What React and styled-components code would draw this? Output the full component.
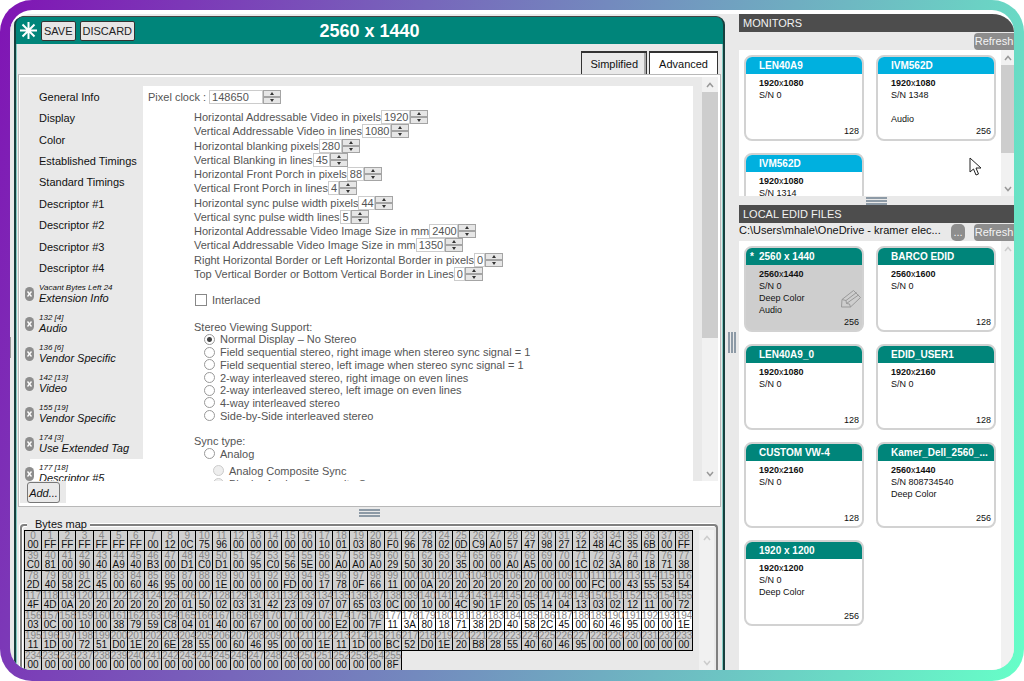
import { styled, createGlobalStyle, css } from "styled-components";

const GlobalStyle = createGlobalStyle`
  * {
    box-sizing: border-box;
  }
  body {
    margin: 0;
    background: #fff;
    font-family: "Liberation Sans", Arial, sans-serif;
    font-size: 11px;
    line-height: 12px;
    color: #111;
  }
  button, input {
    font: inherit;
    color: inherit;
    margin: 0;
    padding: 0;
  }
`;

const Frame = styled.div`
  height: 100vh;
  padding: 10px 10px 11px;
  border-radius: 32px;
  background: linear-gradient(106deg, #8014b4, #66ffc8);
`;

const Screen = styled.div`
  position: relative;
  display: flex;
  height: 100%;
  padding-left: 4px;
  overflow: hidden;
  border-radius: 22px;
  border-top: 4px solid #fff;
  background: #e9e9e9;
`;

/* editor */

const Editor = styled.main`
  flex: 1;
  min-width: 0;
  display: flex;
  flex-direction: column;
  margin-top: 2px;
  border: 2px solid #17403e;
  border-top: 1px solid #444;
  border-bottom: 0;
  border-radius: 9px 9px 0 0;
  background: #00857a;
`;

const TitleBar = styled.header`
  display: grid;
  grid-template-columns: 1fr auto 1fr;
  align-items: center;
  height: 27px;
  padding: 0 4px;
  h1 {
    margin: 0;
    font-size: 18px;
    line-height: 20px;
    color: #fff;
  }
`;

const Actions = styled.div`
  display: flex;
  align-items: center;
  gap: 4px;
`;

const BarButton = styled.button`
  height: 20px;
  padding: 0 2px;
  border: 1px solid #333;
  border-radius: 2px;
  background: #e6e6e6;
  color: #222;
`;

const EditorBody = styled.div`
  flex: 1;
  min-height: 0;
  display: flex;
  flex-direction: column;
  padding: 0 1px;
  border: solid #85cbc4;
  border-width: 0 1px;
  background: #e9e9e9;
`;

const Tabs = styled.div`
  display: flex;
  justify-content: flex-end;
  gap: 2px;
  height: 30px;
  padding: 7px 3px 0 0;
`;

const Tab = styled.button`
  padding: 0 ${(p) => (p.$active ? 9 : 8)}px;
  border: 1px solid #333;
  border-top-width: 2px;
  border-bottom: 0;
  background: ${(p) => (p.$active ? "#fff" : "#e9e9e9")};
  box-shadow: ${(p) => (p.$active ? "none" : "inset -2px 0 #aaa")};
`;

const TabPanel = styled.section`
  flex: 1;
  min-height: 0;
  display: flex;
  flex-direction: column;
  padding: 2px 2px 0 1px;
  border: 1px solid #b8b8b8;
  background: #fff;
`;

const Scroller = styled.div`
  flex: 1;
  min-height: 0;
  display: flex;
  overflow: hidden;
  background: #e9e9e9;
`;

const Nav = styled.nav`
  width: 123px;
  padding-top: 9px;
`;

const PageList = styled.div`
  display: flex;
  flex-direction: column;
  min-height: 193px;
  a {
    flex: 1;
    display: flex;
    align-items: center;
    padding-left: 19px;
    color: #111;
    text-decoration: none;
    white-space: nowrap;
  }
`;

const Block = styled.div`
  display: flex;
  align-items: flex-start;
  gap: 5px;
  height: 30px;
  padding: 4px 0 0 5px;
  font-style: italic;
  ${(p) =>
    p.$active &&
    css`
      background: linear-gradient(90deg, transparent 10px, #fff 10px);
    `}
  a {
    color: #111;
    text-decoration: none;
    white-space: nowrap;
  }
  small {
    display: block;
    font-size: 8px;
    line-height: 9px;
  }
`;

const RemoveButton = styled.button`
  flex: none;
  display: flex;
  align-items: center;
  justify-content: center;
  width: 9px;
  height: 14px;
  margin-top: 4px;
  border: 0;
  border-radius: 5px;
  background: #8d8d8d;
  svg {
    display: block;
  }
`;

const Form = styled.form`
  flex: 1;
  min-width: 0;
  margin: 9px 9px 0 0;
  padding: 4px 0 0 5px;
  background: #fff;
  color: #555;
  white-space: nowrap;
`;

const Indent = styled.div`
  padding-left: 46px;
`;

const Rows = styled.div`
  display: flex;
  flex-direction: column;
  min-height: 171px;
  margin-top: 6px;
`;

const FieldRow = styled.div`
  flex: 1;
  display: flex;
  align-items: center;
  gap: ${(p) => p.$gap || 0}px;
`;

const Spinner = styled.span`
  display: inline-flex;
  input {
    width: ${(p) => p.$width}px;
    height: 14px;
    padding-left: 2px;
    border: 1px solid #ccc;
    background: #fff;
    outline: 0;
  }
`;

const Steps = styled.span`
  display: flex;
  flex-direction: column;
  width: 18px;
  height: 14px;
  button {
    flex: 1;
    display: flex;
    align-items: center;
    justify-content: center;
    min-height: 0;
    border: 1px solid #a4a4a4;
    background: #e6e6e6;
  }
`;

const CheckRow = styled.label`
  display: flex;
  align-items: center;
  gap: 5px;
  margin-top: 12px;
  line-height: 14px;
  input {
    appearance: none;
    width: 12px;
    height: 12px;
    margin-left: 1px;
    border: 1px solid #888;
    background: #fff;
  }
`;

const Group = styled.div`
  margin-top: ${(p) => p.$top}px;
`;

const Radios = styled.div`
  display: flex;
  flex-direction: column;
  min-height: ${(p) => p.$height}px;
  padding-left: ${(p) => p.$indent || 10}px;
`;

const RadioRow = styled.label`
  flex: 1;
  display: flex;
  align-items: center;
  gap: 5px;
  input {
    appearance: none;
    width: 11px;
    height: 11px;
    border: 1px solid #999;
    border-radius: 50%;
    background: #fff;
  }
  input:checked {
    background: radial-gradient(#444 0 2px, #fff 3px);
  }
  input:disabled {
    border-color: #ccc;
    background: #eee;
  }
`;

const AddBar = styled.div`
  display: flex;
  height: 25px;
  div {
    width: 46px;
    height: 22px;
    padding: 1px 0 0 7px;
    background: #e9e9e9;
  }
  button {
    width: 33px;
    height: 21px;
    border: 1px solid #777;
    border-radius: 3px;
    background: #e9e9e9;
    font-style: italic;
  }
`;

const Grip = styled.div`
  display: flex;
  justify-content: center;
  align-items: center;
  width: ${(p) => (p.$vertical ? "14px" : "auto")};
  height: ${(p) => (p.$vertical ? "auto" : `${p.$size}px`)};
  &::before {
    content: "";
    width: ${(p) => (p.$vertical ? "8px" : "21px")};
    height: ${(p) => (p.$vertical ? "21px" : "8px")};
    background: repeating-linear-gradient(
      ${(p) => (p.$vertical ? "90deg" : "180deg")},
      #8d9aa6 0 2px,
      #e9e9e9 2px 3px
    );
  }
`;

/* bytes map */

const BytesArea = styled.div`
  flex: 0 0 163px;
  overflow: hidden;
`;

const BytesBox = styled.fieldset`
  min-width: 0;
  height: 170px;
  margin: 0 3px 0 2px;
  padding: 0 2px;
  border: 2px solid #808080;
  border-bottom: 0;
  border-radius: 4px;
  box-shadow: inset 1px 1px #fff, -1px -1px #fff;
  legend {
    margin-left: 3px;
    padding: 0 3px 0 8px;
    line-height: 11px;
    background: #e9e9e9;
  }
`;

const BytesRow = styled.div`
  display: flex;
  height: 140px;
  align-items: flex-start;
`;

const ByteGrid = styled.div`
  flex: 1;
  min-width: 0;
  margin-right: 6px;
`;

const ByteTable = styled.table`
  width: 100%;
  table-layout: fixed;
  border-collapse: collapse;
  font-size: 10px;
  line-height: 9px;
`;

const Byte = styled.td`
  height: 20px;
  padding: 0;
  border: 1px solid #000;
  background: ${(p) => (p.$active ? "#fff" : "#d0d0d0")};
  text-align: center;
  vertical-align: top;
  span {
    display: block;
    color: #888;
  }
`;

/* scroll bar */

const Track = styled.div`
  flex: none;
  display: flex;
  flex-direction: column;
  align-items: center;
  align-self: stretch;
  width: ${(p) => p.$width}px;
  background: #f1f1f1;
  button {
    display: flex;
    align-items: center;
    justify-content: center;
    width: 100%;
    height: 15px;
    border: 0;
    background: none;
    color: ${(p) => (p.$faint ? "#ccc" : "#999")};
  }
`;

const Thumb = styled.div`
  width: 100%;
  height: ${(p) => p.$size}%;
  margin-bottom: auto;
  background: #cdcdcd;
`;

/* side panels */

const Side = styled.aside`
  flex: 0 0 275px;
  min-width: 0;
  display: flex;
  flex-direction: column;
`;

const Heading = styled.h2`
  flex: none;
  margin: 0;
  padding: 0 4px;
  background: #4d4d4d;
  color: #f2f2f2;
  font-size: 11px;
  font-weight: 400;
  line-height: 18px;
`;

const Tools = styled.div`
  flex: none;
  display: flex;
  align-items: center;
  gap: 9px;
  height: 18px;
  span {
    flex: 1;
    padding-bottom: 4px;
    overflow: hidden;
    white-space: nowrap;
  }
`;

const GreyButton = styled.button`
  flex: none;
  height: 17px;
  width: ${(p) => (p.$wide ? "40px" : "14px")};
  border: 0;
  border-radius: ${(p) => (p.$wide ? "4px 0 0 4px" : "5px")};
  background: #8d8d8d;
  color: #f4f4f4;
  text-align: center;
`;

const ListBox = styled.div`
  display: flex;
  flex: ${(p) => (p.$height ? `0 0 ${p.$height}px` : "1")};
  min-height: 0;
  overflow: hidden;
`;

const Cards = styled.div`
  flex: 1;
  display: grid;
  grid-template-columns: 1fr 1fr;
  grid-auto-rows: 86px;
  gap: 12px;
  padding: 5px;
  background: #fff;
`;

const Card = styled.article`
  display: flex;
  flex-direction: column;
  min-width: 0;
  overflow: hidden;
  border: 2px solid #d2d2d2;
  border-radius: 8px;
  background: ${(p) => (p.$selected ? "#cecece" : "#fff")};
  font-size: 9px;
  h3 {
    display: flex;
    margin: 0;
    padding-right: 3px;
    background: ${(p) => p.$color};
    color: #fff;
    font-size: 10px;
    line-height: 17px;
    white-space: nowrap;
  }
  h3 i {
    width: 13px;
    padding-left: 4px;
    font-style: normal;
  }
`;

const CardBody = styled.div`
  position: relative;
  flex: 1;
  padding: 3px 3px 2px 13px;
  p {
    height: 12px;
    margin: 0;
  }
  p:last-of-type {
    text-align: right;
  }
  svg {
    position: absolute;
    right: 1px;
    bottom: 22px;
  }
`;

const Cursor = styled.svg`
  position: absolute;
  right: 32px;
  top: 143px;
`;

const EdgeGrip = styled.i`
  position: absolute;
  left: 0;
  top: 323px;
  width: 1px;
  height: 21px;
  background: #999;
`;

const pages = [
  "General Info",
  "Display",
  "Color",
  "Established Timings",
  "Standard Timings",
  "Descriptor #1",
  "Descriptor #2",
  "Descriptor #3",
  "Descriptor #4",
];

const blocks = [
  ["Vacant Bytes Left 24", "Extension Info"],
  ["132 [4]", "Audio"],
  ["136 [6]", "Vendor Specific"],
  ["142 [13]", "Video"],
  ["155 [19]", "Vendor Specific"],
  ["174 [3]", "Use Extended Tag"],
  ["177 [18]", "Descriptor #5"],
];

const fields = [
  ["Horizontal Addressable Video in pixels", "1920"],
  ["Vertical Addressable Video in lines", "1080"],
  ["Horizontal blanking pixels", "280"],
  ["Vertical Blanking in lines", "45"],
  ["Horizontal Front Porch in pixels", "88"],
  ["Vertical Front Porch in lines", "4"],
  ["Horizontal sync pulse width pixels", "44"],
  ["Vertical sync pulse width lines", "5"],
  ["Horizontal Addressable Video Image Size in mm", "2400"],
  ["Vertical Addressable Video Image Size in mm", "1350"],
  ["Right Horizontal Border or Left Horizontal Border in pixels", "0"],
  ["Top Vertical Border or Bottom Vertical Border in Lines", "0"],
];

const stereoModes = [
  "Normal Display – No Stereo",
  "Field sequential stereo, right image when stereo sync signal = 1",
  "Field sequential stereo, left image when stereo sync signal = 1",
  "2-way interleaved stereo, right image on even lines",
  "2-way interleaved stereo, left image on even lines",
  "4-way interleaved stereo",
  "Side-by-Side interleaved stereo",
];

const bytes = `
00 FF FF FF FF FF FF 00 12 0C 75 96 00 00 00 00 00 10 01 03 80 F0 96 78 02 0D C9 A0 57 47 98 27 12 48 4C 35 6B 00 FF
C0 81 00 90 40 A9 40 B3 00 D1 C0 D1 00 95 C0 56 5E 00 A0 A0 A0 29 50 30 20 35 00 00 A0 A5 00 00 1C 02 3A 80 18 71 38
2D 40 58 2C 45 00 60 46 95 00 00 1E 00 00 00 FD 00 17 78 0F 66 11 00 0A 20 20 20 20 20 20 00 00 00 FC 00 43 55 53 54
4F 4D 0A 20 20 20 20 20 20 01 50 02 03 31 42 23 09 07 07 65 03 0C 00 10 00 4C 90 1F 20 05 14 04 13 03 02 12 11 00 72
03 0C 00 10 00 38 79 59 C8 04 01 40 00 67 00 00 00 00 E2 00 7F 11 3A 80 18 71 38 2D 40 58 2C 45 00 60 46 95 00 00 1E
11 1D 00 72 51 D0 1E 20 6E 28 55 00 60 46 95 00 00 1E 11 1D 00 BC 52 D0 1E 20 B8 28 55 40 60 46 95 00 00 00 00 00 00
00 00 00 00 00 00 00 00 00 00 00 00 00 00 00 00 00 00 00 00 00 8F
`
  .trim()
  .split("\n")
  .map((row) => row.split(" "));

const BLUE = "#00b0df";
const TEAL = "#00857a";

const monitors = [
  { name: "LEN40A9", w: 1920, h: 1080, sn: "0", size: 128 },
  { name: "IVM562D", w: 1920, h: 1080, sn: "1348", audio: true, size: 256 },
  { name: "IVM562D", w: 1920, h: 1080, sn: "1314" },
];

const files = [
  { name: "2560 x 1440", w: 2560, h: 1440, sn: "0", deep: true, audio: true, size: 256, selected: true },
  { name: "BARCO EDID", w: 2560, h: 1600, sn: "0", size: 128 },
  { name: "LEN40A9_0", w: 1920, h: 1080, sn: "0", size: 128 },
  { name: "EDID_USER1", w: 1920, h: 2160, sn: "0", size: 128 },
  { name: "CUSTOM VW-4", w: 1920, h: 2160, sn: "0", size: 128 },
  { name: "Kamer_Dell_2560_...", w: 2560, h: 1440, sn: "808734540", deep: true, size: 256 },
  { name: "1920 x 1200", w: 1920, h: 1200, sn: "0", deep: true, size: 256 },
];

const Chevron = ({ down }) => (
  <svg width="8" height="6" viewBox="0 0 8 6" fill="none" stroke="currentColor" strokeWidth="1.5">
    <path d={down ? "M1 1l3 3.5L7 1" : "M1 5l3-3.5L7 5"} />
  </svg>
);

const ScrollBar = ({ width, thumb, faint, noDown }) => (
  <Track $width={width} $faint={faint}>
    <button type="button" aria-label="Scroll up">
      <Chevron />
    </button>
    <Thumb $size={thumb} />
    {!noDown && (
      <button type="button" aria-label="Scroll down">
        <Chevron down />
      </button>
    )}
  </Track>
);

const NumberBox = ({ id, value, width }) => (
  <Spinner $width={width || 5 + 6 * value.length}>
    <input id={id} type="text" defaultValue={value} />
    <Steps>
      <button type="button" aria-label="Increase">
        <svg width="4" height="3" viewBox="0 0 4 3">
          <path d="M2 0l2 3H0z" fill="#333" />
        </svg>
      </button>
      <button type="button" aria-label="Decrease">
        <svg width="4" height="3" viewBox="0 0 4 3">
          <path d="M0 0h4L2 3z" fill="#333" />
        </svg>
      </button>
    </Steps>
  </Spinner>
);

const DeviceCard = ({ item, color }) => (
  <Card $color={color} $selected={item.selected}>
    <h3>
      <i>{item.selected ? "*" : ""}</i>
      {item.name}
    </h3>
    <CardBody>
      <p>
        <b>{item.w}</b>x<b>{item.h}</b>
      </p>
      <p>S/N {item.sn}</p>
      <p>{item.deep ? "Deep Color" : ""}</p>
      <p>{item.audio ? "Audio" : ""}</p>
      <p>{item.size}</p>
      {item.selected && (
        <svg width="20" height="18" viewBox="0 0 20 18" fill="none" stroke="#999" strokeLinejoin="round">
          <path d="M.5 17L1 9.500L12.500.5L19.500 7.500L9.500 17zM1 9.500l4 1 .5 3 3 .5 1 3M5 10.500L15.500 2.500M5.500 13.500L17.500 5" />
        </svg>
      )}
    </CardBody>
  </Card>
);

const App = () => {
  return (
    <>
      <GlobalStyle />
      <Frame>
        <Screen>
          <Editor>
            <TitleBar>
              <Actions>
                <svg width="17" height="17" viewBox="0 0 17 17" stroke="#fff" strokeWidth="2">
                  <path d="M8.500 0v17M0 8.500h17M2.500 2.500l12 12M14.500 2.500l-12 12" />
                </svg>
                <BarButton type="button">SAVE</BarButton>
                <BarButton type="button">DISCARD</BarButton>
              </Actions>
              <h1>2560 x 1440</h1>
            </TitleBar>
            <EditorBody>
              <Tabs>
                <Tab type="button">Simplified</Tab>
                <Tab type="button" $active>
                  Advanced
                </Tab>
              </Tabs>
              <TabPanel>
                <Scroller>
                  <Nav>
                    <PageList>
                      {pages.map((page) => (
                        <a key={page} href="#page">
                          {page}
                        </a>
                      ))}
                    </PageList>
                    {blocks.map(([info, name], i) => (
                      <Block key={info} $active={i === blocks.length - 1}>
                        <RemoveButton type="button" aria-label={`Remove ${name}`}>
                          <svg width="5" height="6" viewBox="0 0 5 6" stroke="#fff" strokeWidth="1.3">
                            <path d="M.5.5l4 5M4.500.5l-4 5" />
                          </svg>
                        </RemoveButton>
                        <a href="#block">
                          <small>{info}</small>
                          {name}
                        </a>
                      </Block>
                    ))}
                  </Nav>
                  <Form>
                    <FieldRow $gap={3}>
                      <label htmlFor="clock">Pixel clock :</label>
                      <NumberBox id="clock" value="148650" width={54} />
                    </FieldRow>
                    <Indent>
                      <Rows>
                        {fields.map(([label, value], i) => (
                          <FieldRow key={label}>
                            <label htmlFor={`field${i}`}>{label}</label>
                            <NumberBox id={`field${i}`} value={value} />
                          </FieldRow>
                        ))}
                      </Rows>
                      <CheckRow>
                        <input type="checkbox" />
                        Interlaced
                      </CheckRow>
                      <Group $top={14}>
                        Stereo Viewing Support:
                        <Radios $height={89}>
                          {stereoModes.map((mode, i) => (
                            <RadioRow key={mode}>
                              <input type="radio" name="stereo" defaultChecked={i === 0} />
                              {mode}
                            </RadioRow>
                          ))}
                        </Radios>
                      </Group>
                      <Group $top={13}>
                        Sync type:
                        <Radios $height={13}>
                          <RadioRow>
                            <input type="radio" name="sync" />
                            Analog
                          </RadioRow>
                        </Radios>
                      </Group>
                      <Group $top={4}>
                        <Radios $height={26} $indent={19}>
                          <RadioRow>
                            <input type="radio" name="analog" disabled />
                            Analog Composite Sync
                          </RadioRow>
                          <RadioRow>
                            <input type="radio" name="analog" disabled />
                            Bipolar Analog Composite Sync
                          </RadioRow>
                        </Radios>
                      </Group>
                    </Indent>
                  </Form>
                  <ScrollBar width={16} thumb={61} />
                </Scroller>
                <AddBar>
                  <div>
                    <button type="button">Add...</button>
                  </div>
                </AddBar>
              </TabPanel>
              <BytesArea>
                <Grip $size={12} />
                <BytesBox>
                  <legend>Bytes map</legend>
                  <BytesRow>
                    <ByteGrid>
                      <ByteTable>
                        <tbody>
                          {bytes.map((row, r) => (
                            <tr key={r}>
                              {row.map((value, c) => {
                                const index = r * 39 + c;
                                return (
                                  <Byte key={index} $active={index >= 177 && index <= 194}>
                                    <span>{index}</span>
                                    {value}
                                  </Byte>
                                );
                              })}
                            </tr>
                          ))}
                        </tbody>
                      </ByteTable>
                    </ByteGrid>
                    <ScrollBar width={15} thumb={0} faint />
                  </BytesRow>
                </BytesBox>
              </BytesArea>
            </EditorBody>
          </Editor>
          <Grip $vertical />
          <Side>
            <Heading>MONITORS</Heading>
            <Tools>
              <span />
              <GreyButton type="button" $wide>
                Refresh
              </GreyButton>
            </Tools>
            <ListBox $height={146}>
              <Cards>
                {monitors.map((item, i) => (
                  <DeviceCard key={i} item={item} color={BLUE} />
                ))}
              </Cards>
              <ScrollBar width={13} thumb={60} />
            </ListBox>
            <Grip $size={9} />
            <Heading>LOCAL EDID FILES</Heading>
            <Tools>
              <span>C:\Users\mhale\OneDrive - kramer elec...</span>
              <GreyButton type="button">...</GreyButton>
              <GreyButton type="button" $wide>
                Refresh
              </GreyButton>
            </Tools>
            <ListBox>
              <Cards>
                {files.map((item) => (
                  <DeviceCard key={item.name} item={item} color={TEAL} />
                ))}
              </Cards>
              <ScrollBar width={13} thumb={0} faint noDown />
            </ListBox>
          </Side>
          <EdgeGrip />
          <Cursor width="13" height="19" viewBox="0 0 13 19">
            <path d="M1 1v14l3.500-3 2.500 6 2.500-1-2.500-6h5z" fill="#fff" stroke="#222" />
          </Cursor>
        </Screen>
      </Frame>
    </>
  );
};

export default App;
